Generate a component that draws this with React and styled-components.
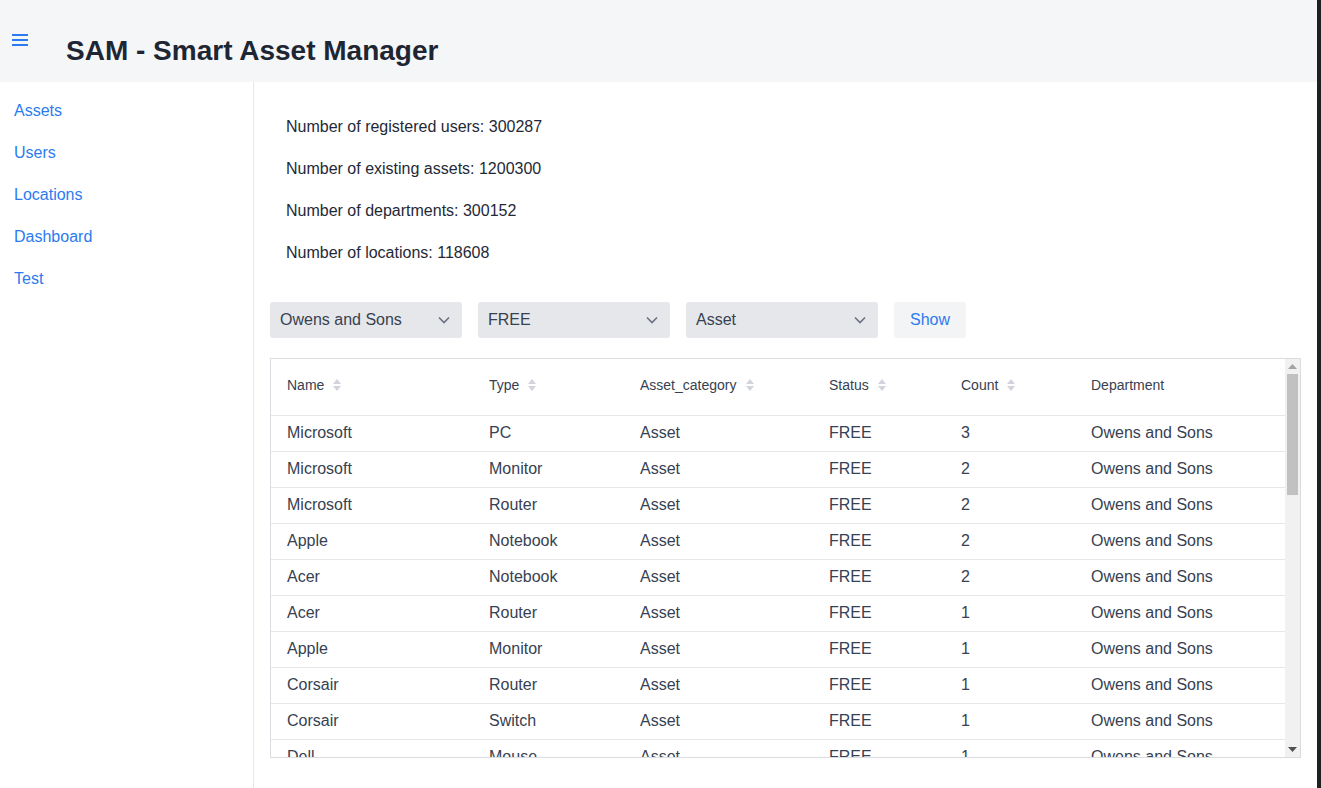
import React from "react";
import styled, { createGlobalStyle } from "styled-components";

const GlobalStyle = createGlobalStyle`
  html, body {
    margin: 0;
    padding: 0;
    height: 100%;
    overflow: hidden;
  }
  body {
    font-family: "Liberation Sans", Arial, sans-serif;
    color: #1f2937;
    background: #fff;
  }
`;

const Frame = styled.div`
  display: flex;
  height: 788px;
`;

const Page = styled.div`
  flex: 1;
  display: flex;
  flex-direction: column;
  min-width: 0;
`;

const Edge = styled.div`
  width: 4px;
  background: #1f1f1f;
`;

const Header = styled.header`
  height: 82px;
  flex-shrink: 0;
  background: #f5f6f8;
  display: flex;
  align-items: flex-start;
`;

const MenuButton = styled.button`
  background: none;
  border: none;
  padding: 0;
  margin: 34px 0 0 12px;
  width: 16px;
  height: 12px;
  display: flex;
  flex-direction: column;
  justify-content: space-between;
  cursor: pointer;
`;

const Bar = styled.span`
  display: block;
  height: 2px;
  background: #2b7bf0;
`;

const Title = styled.h1`
  margin: 35px 0 0 38px;
  font-size: 28px;
  line-height: 32px;
  font-weight: bold;
  color: #1e2633;
`;

const Body = styled.div`
  flex: 1;
  display: flex;
  min-height: 0;
`;

const Sidebar = styled.nav`
  width: 253px;
  border-right: 1px solid #e5e7eb;
  padding-top: 8px;
  display: flex;
  flex-direction: column;
`;

const NavLink = styled.a`
  display: block;
  padding-left: 14px;
  line-height: 42px;
  font-size: 16px;
  color: #2b7bf0;
  text-decoration: none;
`;

const Content = styled.main`
  flex: 1;
  padding: 24px 16px 0;
  min-width: 0;
`;

const Stats = styled.div`
  padding-left: 16px;
`;

const Stat = styled.p`
  margin: 0;
  line-height: 42px;
  font-size: 16px;
  color: #1f2937;
`;

const Filters = styled.div`
  display: flex;
  gap: 16px;
  margin-top: 28px;
`;

const SelectBox = styled.div`
  width: 192px;
  height: 36px;
  box-sizing: border-box;
  background: #e5e7eb;
  border-radius: 3px;
  padding: 0 12px 0 10px;
  display: flex;
  align-items: center;
  justify-content: space-between;
  font-size: 16px;
  color: #374151;
`;

const ShowButton = styled.button`
  width: 72px;
  height: 36px;
  border: none;
  border-radius: 3px;
  background: #f3f4f6;
  color: #2b7bf0;
  font-family: inherit;
  font-size: 16px;
  cursor: pointer;
`;

const TableWrap = styled.div`
  margin-top: 20px;
  height: 400px;
  box-sizing: border-box;
  border: 1px solid #d9dce1;
  display: flex;
`;

const ScrollArea = styled.div`
  flex: 1;
  min-width: 0;
  overflow: hidden;
`;

const ScrollTrack = styled.div`
  width: 15px;
  flex-shrink: 0;
  background: #f1f1f1;
  display: flex;
  flex-direction: column;
  align-items: center;
`;

const ArrowBox = styled.div`
  width: 15px;
  height: 15px;
  display: flex;
  align-items: center;
  justify-content: center;
`;

const Thumb = styled.div`
  width: 11px;
  height: 121px;
  background: #c1c1c1;
`;

const Spacer = styled.div`
  flex: 1;
`;

const Table = styled.table`
  width: 100%;
  border-collapse: collapse;
  table-layout: fixed;
`;

const Th = styled.th`
  height: 56px;
  padding: 0 16px 4px;
  text-align: left;
  font-weight: normal;
  font-size: 14px;
  color: #374151;
  border-bottom: 1px solid #e5e7eb;
  box-sizing: border-box;
`;

const HeadInner = styled.span`
  display: inline-flex;
  align-items: center;
  gap: 8px;
`;

const Td = styled.td`
  height: 36px;
  padding: 0 16px;
  font-size: 16px;
  color: #374151;
  border-bottom: 1px solid #e5e7eb;
  box-sizing: border-box;
  white-space: nowrap;
`;

const Chevron = () => (
  <svg width="12" height="8" viewBox="0 0 12 8" fill="none">
    <path d="M1 1.5l5 5 5-5" stroke="#6b7280" strokeWidth="1.6" />
  </svg>
);

const SortIcon = () => (
  <svg width="10" height="16" viewBox="0 0 10 16">
    <path d="M5 2l4 5H1z" fill="#d1d5db" />
    <path d="M5 14l4-5H1z" fill="#d1d5db" />
  </svg>
);

const ArrowUp = () => (
  <svg width="9" height="5" viewBox="0 0 9 5">
    <path d="M0 5h9L4.5 0z" fill="#a3a3a3" />
  </svg>
);

const ArrowDown = () => (
  <svg width="9" height="5" viewBox="0 0 9 5">
    <path d="M0 0h9L4.5 5z" fill="#505050" />
  </svg>
);

const columns = [
  { key: "name", label: "Name", width: 202, sort: true },
  { key: "type", label: "Type", width: 151, sort: true },
  { key: "cat", label: "Asset_category", width: 189, sort: true },
  { key: "status", label: "Status", width: 132, sort: true },
  { key: "count", label: "Count", width: 130, sort: true },
  { key: "dept", label: "Department", width: 210, sort: false },
];

const base = [
  ["Microsoft", "PC", 3],
  ["Microsoft", "Monitor", 2],
  ["Microsoft", "Router", 2],
  ["Apple", "Notebook", 2],
  ["Acer", "Notebook", 2],
  ["Acer", "Router", 1],
  ["Apple", "Monitor", 1],
  ["Corsair", "Router", 1],
  ["Corsair", "Switch", 1],
  ["Dell", "Mouse", 1],
  ["Dell", "PC", 1],
];

const rows = base.map(([name, type, count]) => ({
  name,
  type,
  cat: "Asset",
  status: "FREE",
  count,
  dept: "Owens and Sons",
}));

const navItems = ["Assets", "Users", "Locations", "Dashboard", "Test"];

const stats = [
  "Number of registered users: 300287",
  "Number of existing assets: 1200300",
  "Number of departments: 300152",
  "Number of locations: 118608",
];

export default function App() {
  return (
    <>
      <GlobalStyle />
      <Frame>
        <Page>
          <Header>
            <MenuButton aria-label="menu">
              <Bar />
              <Bar />
              <Bar />
            </MenuButton>
            <Title>SAM - Smart Asset Manager</Title>
          </Header>
          <Body>
            <Sidebar>
              {navItems.map((item) => (
                <NavLink key={item} href="#">
                  {item}
                </NavLink>
              ))}
            </Sidebar>
            <Content>
              <Stats>
                {stats.map((s) => (
                  <Stat key={s}>{s}</Stat>
                ))}
              </Stats>
              <Filters>
                <SelectBox>
                  Owens and Sons <Chevron />
                </SelectBox>
                <SelectBox>
                  FREE <Chevron />
                </SelectBox>
                <SelectBox>
                  Asset <Chevron />
                </SelectBox>
                <ShowButton>Show</ShowButton>
              </Filters>
              <TableWrap>
                <ScrollArea>
                  <Table>
                    <colgroup>
                      {columns.map((c) => (
                        <col key={c.key} style={{ width: c.width }} />
                      ))}
                    </colgroup>
                    <thead>
                      <tr>
                        {columns.map((c) => (
                          <Th key={c.key}>
                            <HeadInner>
                              {c.label}
                              {c.sort && <SortIcon />}
                            </HeadInner>
                          </Th>
                        ))}
                      </tr>
                    </thead>
                    <tbody>
                      {rows.map((r, i) => (
                        <tr key={i}>
                          {columns.map((c) => (
                            <Td key={c.key}>{r[c.key]}</Td>
                          ))}
                        </tr>
                      ))}
                    </tbody>
                  </Table>
                </ScrollArea>
                <ScrollTrack>
                  <ArrowBox>
                    <ArrowUp />
                  </ArrowBox>
                  <Thumb />
                  <Spacer />
                  <ArrowBox>
                    <ArrowDown />
                  </ArrowBox>
                </ScrollTrack>
              </TableWrap>
            </Content>
          </Body>
        </Page>
        <Edge />
      </Frame>
    </>
  );
}
